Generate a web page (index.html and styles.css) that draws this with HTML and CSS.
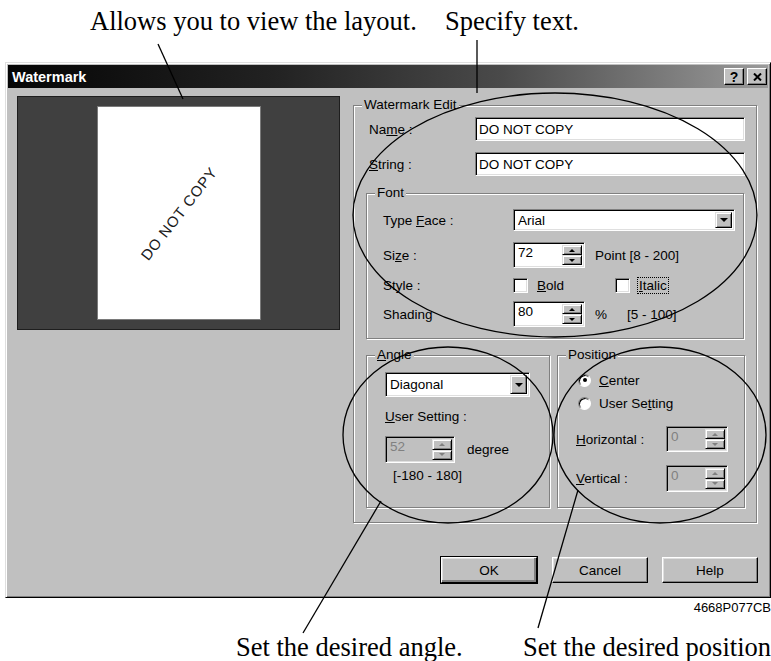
FILE: index.html
```html
<!DOCTYPE html>
<html>
<head>
<meta charset="UTF-8">
<title>Watermark</title>
<link rel="stylesheet" href="styles.css">
</head>
<body>
<div class="page">
	<div class="caps caps-top">
		<span class="cap cap-layout">Allows you to view the layout.</span>
		<span class="cap">Specify text.</span>
	</div>

	<div class="dialog">
		<div class="titlebar">
			<span class="title">Watermark</span>
			<span class="tbtns">
				<span class="tbtn">?</span>
				<span class="tbtn"><svg width="9" height="8" viewBox="0 0 9 8"><path d="M1 0.5 L8 7.5 M8 0.5 L1 7.5" stroke="#000" stroke-width="2" fill="none"/></svg></span>
			</span>
		</div>

		<div class="dlg-body">
			<div class="preview">
				<div class="sheet"><span class="wm">DO NOT COPY</span></div>
			</div>

			<fieldset class="grp grp-edit">
				<legend>Watermark Edit</legend>
				<div class="edit-in">
					<div class="erow"><label>Na<u>m</u>e :</label><div class="field">DO NOT COPY</div></div>
					<div class="erow erow-last"><label><u>S</u>tring :</label><div class="field">DO NOT COPY</div></div>

					<fieldset class="grp grp-font">
						<legend>Font</legend>
						<div class="font-in">
							<div class="frow fr-face">
								<label>Type <u>F</u>ace :</label>
								<div class="combo combo-face"><span class="cval">Arial</span><span class="dd"></span></div>
							</div>
							<div class="frow fr-size">
								<label>Si<u>z</u>e :</label>
								<div class="spin"><span class="sval">72</span><span class="sbtns"><span class="sb up"></span><span class="sb dn"></span></span></div>
								<span class="unit">Point [8 - 200]</span>
							</div>
							<div class="frow fr-style">
								<label>Style :</label>
								<span class="chk"><span class="box"></span><u>B</u>old</span>
								<span class="chk"><span class="box"></span><span class="focus"><u>I</u>talic</span></span>
							</div>
							<div class="frow fr-shade">
								<label>Shading</label>
								<div class="spin"><span class="sval">80</span><span class="sbtns"><span class="sb up"></span><span class="sb dn"></span></span></div>
								<span class="unit">%</span>
								<span class="range">[5 - 100]</span>
							</div>
						</div>
					</fieldset>

					<div class="lower">
						<fieldset class="grp grp-angle">
							<legend><u>A</u>ngle</legend>
							<div class="ang-in">
								<div class="combo combo-ang"><span class="cval">Diagonal</span><span class="dd"></span></div>
								<div class="ang-lbl"><u>U</u>ser Setting :</div>
								<div class="ang-row">
									<div class="spin spin-ang off"><span class="sval">52</span><span class="sbtns"><span class="sb up"></span><span class="sb dn"></span></span></div>
									<span class="deg">degree</span>
								</div>
								<div class="ang-range">[-180 - 180]</div>
							</div>
						</fieldset>

						<fieldset class="grp grp-pos">
							<legend>Position</legend>
							<div class="pos-in">
								<div class="radio"><span class="dot on"></span><u>C</u>enter</div>
								<div class="radio"><span class="dot"></span>User Se<u>t</u>ting</div>
								<div class="prow">
									<label><u>H</u>orizontal :</label>
									<div class="spin spin-pos off"><span class="sval">0</span><span class="sbtns"><span class="sb up"></span><span class="sb dn"></span></span></div>
								</div>
								<div class="prow prow-v">
									<label><u>V</u>ertical :</label>
									<div class="spin spin-pos off"><span class="sval">0</span><span class="sbtns"><span class="sb up"></span><span class="sb dn"></span></span></div>
								</div>
							</div>
						</fieldset>
					</div>
				</div>
			</fieldset>
		</div>

		<div class="buttons">
			<span class="btn btn-def">OK</span>
			<span class="btn">Cancel</span>
			<span class="btn">Help</span>
		</div>
	</div>

	<div class="code">4668P077CB</div>

	<div class="caps caps-bottom">
		<span class="cap cap-angle">Set the desired angle.</span>
		<span class="cap">Set the desired position</span>
	</div>

	<!-- callout marks drawn over the dialog -->
	<svg class="marks" width="771" height="661" viewBox="0 0 771 661">
		<g fill="none" stroke="#000" stroke-width="1.3">
			<ellipse cx="555" cy="215" rx="202" ry="122"/>
			<ellipse cx="448" cy="435" rx="105" ry="88"/>
			<ellipse cx="660" cy="435" rx="106" ry="88"/>
			<path d="M158 44 L183 99"/>
			<path d="M477 40 V93"/>
			<path d="M381 501 L303 633"/>
			<path d="M578 490 L538 628"/>
		</g>
	</svg>
</div>
</body>
</html>
```

FILE: styles.css
```css
*{margin:0;padding:0;box-sizing:border-box;}
body{background:#fff;font-family:"Liberation Sans",Arial,sans-serif;font-size:13.5px;color:#000;}
u{text-decoration:underline;text-underline-offset:1px;}
.page{position:relative;width:771px;height:661px;overflow:hidden;}
.marks{position:absolute;left:0;top:0;pointer-events:none;}

/* captions round the screenshot */
.caps{display:flex;white-space:nowrap;}
.cap{font-family:"Liberation Serif","Times New Roman",serif;font-size:26.5px;line-height:30px;}
.caps-top{height:62px;padding:6px 0 0 90px;}
.cap-layout{width:355px;}
.caps-bottom{margin-top:17px;padding-left:236px;}
.cap-angle{width:287px;}
.code{text-align:right;font-size:13px;line-height:14px;margin-top:3px;}

/* window */
.dialog{margin-left:5px;width:766px;height:536px;display:flex;flex-direction:column;background:#c0c0c0;border:1px solid;border-color:#dfdfdf #000 #000 #dfdfdf;box-shadow:inset 1px 1px #fff,inset -1px -1px #808080;padding:2px;}
.titlebar{flex:none;height:23px;display:flex;align-items:center;justify-content:space-between;padding:0 1px 0 4px;background:linear-gradient(90deg,#050505 0%,#222 35%,#4a4a4a 65%,#9a9a9a 100%);}
.title{color:#fff;font-weight:bold;font-size:14.5px;}
.tbtns{display:flex;gap:3px;}
.tbtn{width:20px;height:17px;display:flex;align-items:center;justify-content:center;background:#c0c0c0;border:1px solid;border-color:#fff #000 #000 #fff;box-shadow:inset -1px -1px #808080;font-weight:bold;font-size:14px;line-height:1;}

.dlg-body{display:flex;align-items:flex-start;padding:8px 0 0 9px;}
.preview{width:323px;height:234px;background:#404040;border:1px solid #1e1e1e;display:flex;align-items:center;justify-content:center;}
.sheet{width:164px;height:214px;background:#fff;border:1px solid #7a7a7a;display:flex;align-items:center;justify-content:center;}
.wm{transform:rotate(-52deg);font-size:15px;letter-spacing:.8px;color:#1a1a1a;white-space:nowrap;}

/* group boxes */
.grp{border:1px solid #808080;box-shadow:1px 1px #fff,inset 1px 1px #fff;min-width:0;}
.grp>legend{margin-left:8px;padding:0 2px;line-height:16px;background:#c0c0c0;}
.grp-edit{margin:1px 0 0 13px;width:404px;height:426px;}
.edit-in{padding:4px 11px 0 12px;}
.erow{display:flex;align-items:center;height:24px;margin-bottom:11px;}
.erow-last{margin-bottom:9px;}
.erow label{width:109px;padding-left:3px;}

.field,.combo,.spin,.box{background:#fff;border:1px solid;border-color:#808080 #fff #fff #808080;box-shadow:inset 1px 1px #000,inset -1px -1px #dfdfdf;}
.field{width:270px;height:24px;display:flex;align-items:center;padding-left:3px;}

.grp-font{width:378px;height:154px;}
.font-in{padding:8px 0 0 16px;}
.frow{display:flex;align-items:center;}
.frow label{width:130px;}
.fr-face{height:22px;margin-bottom:11px;}
.fr-size{height:26px;}
.fr-style{height:22px;margin-top:6px;}
.fr-shade{height:26px;margin-top:5px;}

.combo{display:flex;align-items:center;justify-content:space-between;padding:2px;}
.combo-face{width:222px;height:22px;}
.cval{padding-left:2px;}
.dd{width:17px;height:100%;background:#c0c0c0;border:1px solid;border-color:#dfdfdf #000 #000 #dfdfdf;box-shadow:inset 1px 1px #fff,inset -1px -1px #808080;display:flex;align-items:center;justify-content:center;}
.dd::after{content:"";border-left:4px solid transparent;border-right:4px solid transparent;border-top:4px solid #000;}

.spin{width:72px;height:26px;display:flex;padding:2px;}
.sval{flex:1;padding-left:2px;line-height:15px;}
.sbtns{width:20px;display:flex;flex-direction:column;}
.sb{flex:1;background:#c0c0c0;border:1px solid;border-color:#dfdfdf #000 #000 #dfdfdf;box-shadow:inset 1px 1px #fff,inset -1px -1px #808080;display:flex;align-items:center;justify-content:center;}
.up::after{content:"";border-left:3px solid transparent;border-right:3px solid transparent;border-bottom:3px solid #000;}
.dn::after{content:"";border-left:3px solid transparent;border-right:3px solid transparent;border-top:3px solid #000;}
.off{background:#c0c0c0;}
.off .sval{color:#808080;}
.off .up::after{border-bottom-color:#808080;}
.off .dn::after{border-top-color:#808080;}
.unit{margin-left:10px;}
.range{margin-left:20px;}

.chk{display:flex;align-items:center;width:102px;}
.box{width:15px;height:15px;margin-right:9px;}
.focus{outline:1px dotted #000;padding:0 1px;margin-left:-1px;}

.lower{display:flex;gap:7px;margin-top:8px;}
.grp-angle{width:184px;height:161px;}
.grp-pos{width:188px;height:161px;}
.ang-in{padding:9px 0 0 18px;}
.combo-ang{width:145px;height:25px;}
.ang-lbl{margin-top:12px;line-height:16px;}
.ang-row{display:flex;align-items:center;margin-top:11px;}
.spin-ang{width:70px;height:27px;}
.deg{margin-left:12px;}
.ang-range{margin:5px 0 0 8px;line-height:16px;}

.pos-in{padding:8px 0 0 18px;}
.radio{display:flex;align-items:center;height:18px;}
.radio+.radio{margin-top:5px;}
.dot{width:13px;height:13px;margin:0 8px 0 2px;border-radius:50%;background:#fff;border:1px solid;border-color:#808080 #fff #fff #808080;box-shadow:inset 1px 1px #000;display:flex;align-items:center;justify-content:center;}
.dot.on::after{content:"";width:4px;height:4px;border-radius:50%;background:#000;}
.prow{display:flex;align-items:center;margin-top:14px;}
.prow-v{margin-top:13px;}
.prow label{width:90px;}
.spin-pos{width:62px;height:26px;}
.prow-v .spin-pos{height:27px;}

/* push buttons */
.buttons{margin-top:auto;display:flex;justify-content:flex-end;padding:0 10px 12px 0;}
.btn{width:96px;height:26px;display:flex;align-items:center;justify-content:center;background:#c0c0c0;border:1px solid;border-color:#fff #000 #000 #fff;box-shadow:inset -1px -1px #808080,inset 1px 1px #dfdfdf;}
.btn+.btn{margin-left:15px;}
.btn:last-child{margin-left:14px;}
.btn-def{outline:1px solid #000;outline-offset:0;box-shadow:inset -2px -2px #808080,inset 1px 1px #dfdfdf;}
```
